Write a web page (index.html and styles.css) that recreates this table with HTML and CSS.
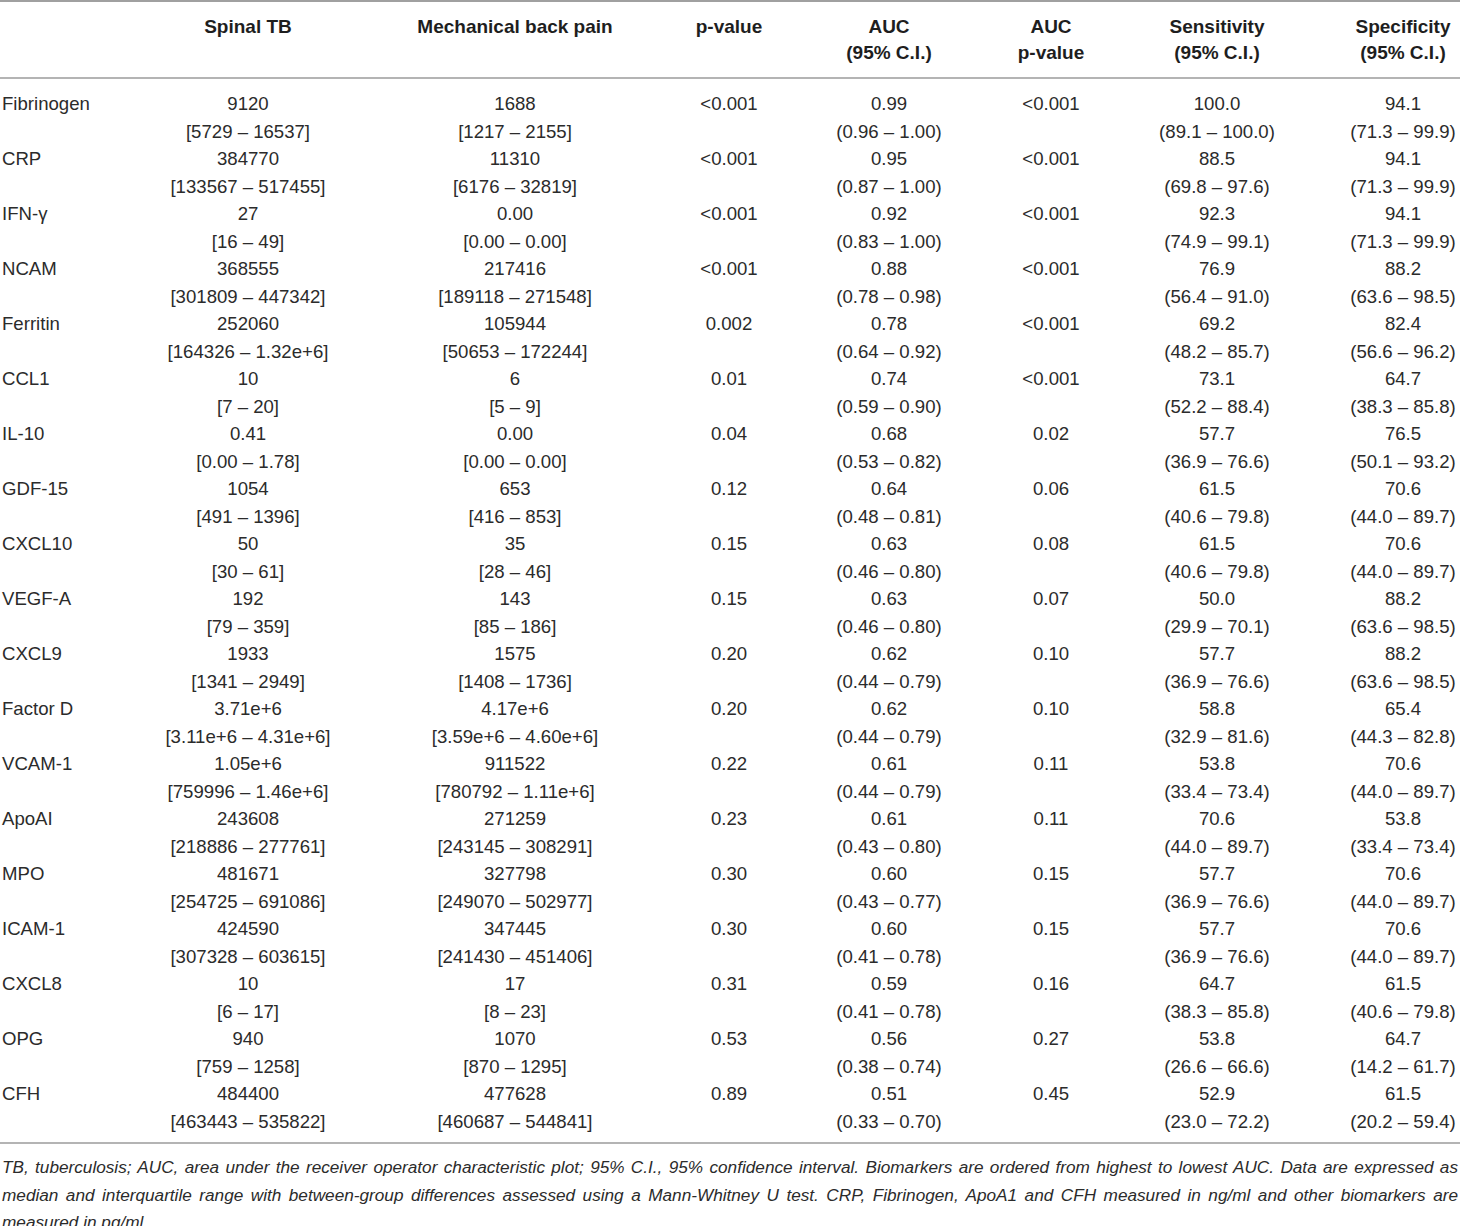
FILE: index.html
```html
<!DOCTYPE html>
<html>
<head>
<meta charset="utf-8">
<link rel="stylesheet" href="styles.css">
</head>
<body>
<table class="data">
<colgroup>
<col class="c0"><col class="c1"><col class="c2"><col class="c3"><col class="c4"><col class="c5"><col class="c6"><col class="c7">
</colgroup>
<thead>
<tr>
<th></th>
<th>Spinal TB</th>
<th>Mechanical back pain</th>
<th>p-value</th>
<th>AUC<br>(95% C.I.)</th>
<th>AUC<br>p-value</th>
<th>Sensitivity<br>(95% C.I.)</th>
<th>Specificity<br>(95% C.I.)</th>
</tr>
</thead>
<tbody>
<tr><td class="name">Fibrinogen</td><td>9120<br>[5729 – 16537]</td><td>1688<br>[1217 – 2155]</td><td>&lt;0.001</td><td>0.99<br>(0.96 – 1.00)</td><td>&lt;0.001</td><td>100.0<br>(89.1 – 100.0)</td><td>94.1<br>(71.3 – 99.9)</td></tr>
<tr><td class="name">CRP</td><td>384770<br>[133567 – 517455]</td><td>11310<br>[6176 – 32819]</td><td>&lt;0.001</td><td>0.95<br>(0.87 – 1.00)</td><td>&lt;0.001</td><td>88.5<br>(69.8 – 97.6)</td><td>94.1<br>(71.3 – 99.9)</td></tr>
<tr><td class="name">IFN-γ</td><td>27<br>[16 – 49]</td><td>0.00<br>[0.00 – 0.00]</td><td>&lt;0.001</td><td>0.92<br>(0.83 – 1.00)</td><td>&lt;0.001</td><td>92.3<br>(74.9 – 99.1)</td><td>94.1<br>(71.3 – 99.9)</td></tr>
<tr><td class="name">NCAM</td><td>368555<br>[301809 – 447342]</td><td>217416<br>[189118 – 271548]</td><td>&lt;0.001</td><td>0.88<br>(0.78 – 0.98)</td><td>&lt;0.001</td><td>76.9<br>(56.4 – 91.0)</td><td>88.2<br>(63.6 – 98.5)</td></tr>
<tr><td class="name">Ferritin</td><td>252060<br>[164326 – 1.32e+6]</td><td>105944<br>[50653 – 172244]</td><td>0.002</td><td>0.78<br>(0.64 – 0.92)</td><td>&lt;0.001</td><td>69.2<br>(48.2 – 85.7)</td><td>82.4<br>(56.6 – 96.2)</td></tr>
<tr><td class="name">CCL1</td><td>10<br>[7 – 20]</td><td>6<br>[5 – 9]</td><td>0.01</td><td>0.74<br>(0.59 – 0.90)</td><td>&lt;0.001</td><td>73.1<br>(52.2 – 88.4)</td><td>64.7<br>(38.3 – 85.8)</td></tr>
<tr><td class="name">IL-10</td><td>0.41<br>[0.00 – 1.78]</td><td>0.00<br>[0.00 – 0.00]</td><td>0.04</td><td>0.68<br>(0.53 – 0.82)</td><td>0.02</td><td>57.7<br>(36.9 – 76.6)</td><td>76.5<br>(50.1 – 93.2)</td></tr>
<tr><td class="name">GDF-15</td><td>1054<br>[491 – 1396]</td><td>653<br>[416 – 853]</td><td>0.12</td><td>0.64<br>(0.48 – 0.81)</td><td>0.06</td><td>61.5<br>(40.6 – 79.8)</td><td>70.6<br>(44.0 – 89.7)</td></tr>
<tr><td class="name">CXCL10</td><td>50<br>[30 – 61]</td><td>35<br>[28 – 46]</td><td>0.15</td><td>0.63<br>(0.46 – 0.80)</td><td>0.08</td><td>61.5<br>(40.6 – 79.8)</td><td>70.6<br>(44.0 – 89.7)</td></tr>
<tr><td class="name">VEGF-A</td><td>192<br>[79 – 359]</td><td>143<br>[85 – 186]</td><td>0.15</td><td>0.63<br>(0.46 – 0.80)</td><td>0.07</td><td>50.0<br>(29.9 – 70.1)</td><td>88.2<br>(63.6 – 98.5)</td></tr>
<tr><td class="name">CXCL9</td><td>1933<br>[1341 – 2949]</td><td>1575<br>[1408 – 1736]</td><td>0.20</td><td>0.62<br>(0.44 – 0.79)</td><td>0.10</td><td>57.7<br>(36.9 – 76.6)</td><td>88.2<br>(63.6 – 98.5)</td></tr>
<tr><td class="name">Factor D</td><td>3.71e+6<br>[3.11e+6 – 4.31e+6]</td><td>4.17e+6<br>[3.59e+6 – 4.60e+6]</td><td>0.20</td><td>0.62<br>(0.44 – 0.79)</td><td>0.10</td><td>58.8<br>(32.9 – 81.6)</td><td>65.4<br>(44.3 – 82.8)</td></tr>
<tr><td class="name">VCAM-1</td><td>1.05e+6<br>[759996 – 1.46e+6]</td><td>911522<br>[780792 – 1.11e+6]</td><td>0.22</td><td>0.61<br>(0.44 – 0.79)</td><td>0.11</td><td>53.8<br>(33.4 – 73.4)</td><td>70.6<br>(44.0 – 89.7)</td></tr>
<tr><td class="name">ApoAI</td><td>243608<br>[218886 – 277761]</td><td>271259<br>[243145 – 308291]</td><td>0.23</td><td>0.61<br>(0.43 – 0.80)</td><td>0.11</td><td>70.6<br>(44.0 – 89.7)</td><td>53.8<br>(33.4 – 73.4)</td></tr>
<tr><td class="name">MPO</td><td>481671<br>[254725 – 691086]</td><td>327798<br>[249070 – 502977]</td><td>0.30</td><td>0.60<br>(0.43 – 0.77)</td><td>0.15</td><td>57.7<br>(36.9 – 76.6)</td><td>70.6<br>(44.0 – 89.7)</td></tr>
<tr><td class="name">ICAM-1</td><td>424590<br>[307328 – 603615]</td><td>347445<br>[241430 – 451406]</td><td>0.30</td><td>0.60<br>(0.41 – 0.78)</td><td>0.15</td><td>57.7<br>(36.9 – 76.6)</td><td>70.6<br>(44.0 – 89.7)</td></tr>
<tr><td class="name">CXCL8</td><td>10<br>[6 – 17]</td><td>17<br>[8 – 23]</td><td>0.31</td><td>0.59<br>(0.41 – 0.78)</td><td>0.16</td><td>64.7<br>(38.3 – 85.8)</td><td>61.5<br>(40.6 – 79.8)</td></tr>
<tr><td class="name">OPG</td><td>940<br>[759 – 1258]</td><td>1070<br>[870 – 1295]</td><td>0.53</td><td>0.56<br>(0.38 – 0.74)</td><td>0.27</td><td>53.8<br>(26.6 – 66.6)</td><td>64.7<br>(14.2 – 61.7)</td></tr>
<tr><td class="name">CFH</td><td>484400<br>[463443 – 535822]</td><td>477628<br>[460687 – 544841]</td><td>0.89</td><td>0.51<br>(0.33 – 0.70)</td><td>0.45</td><td>52.9<br>(23.0 – 72.2)</td><td>61.5<br>(20.2 – 59.4)</td></tr>
</tbody>
</table>
<p class="note">TB, tuberculosis; AUC, area under the receiver operator characteristic plot; 95% C.I., 95% confidence interval. Biomarkers are ordered from highest to lowest AUC. Data are expressed as median and interquartile range with between-group differences assessed using a Mann-Whitney U test. CRP, Fibrinogen, ApoA1 and CFH measured in ng/ml and other biomarkers are measured in pg/ml.</p>
</body>
</html>
```

FILE: styles.css
```css
html, body {
  margin: 0;
  padding: 0;
  background: #ffffff;
}
body {
  font-family: "Liberation Sans", Arial, sans-serif;
  color: #2b2b2b;
  width: 1460px;
}
.data {
  width: 1460px;
  border-collapse: collapse;
  table-layout: fixed;
  font-size: 18.6px;
  line-height: 27.5px;
}
.c0 { width: 160px; }
.c1 { width: 176px; }
.c2 { width: 358px; }
.c3 { width: 70px; }
.c4 { width: 250px; }
.c5 { width: 74px; }
.c6 { width: 258px; }
.c7 { width: 114px; }
.data thead tr {
  border-top: 2px solid #a0a0a0;
  border-bottom: 2px solid #b4b4b4;
}
.data th {
  font-weight: bold;
  font-size: 19px;
  color: #1e1e1e;
  text-align: center;
  vertical-align: top;
  padding: 12px 0 11px;
  line-height: 26px;
  white-space: nowrap;
}
.data td {
  text-align: center;
  vertical-align: top;
  padding: 0;
  white-space: nowrap;
  font-weight: normal;
}
.data td.name {
  text-align: left;
  padding-left: 2px;
}
.data tbody tr:first-child td { padding-top: 11px; }
.data tbody tr:last-child td { padding-bottom: 7px; }
.data tbody tr:last-child { border-bottom: 2px solid #b4b4b4; }
.note {
  margin: 10px 0 0;
  padding: 0 2px;
  font-style: italic;
  font-size: 17.2px;
  line-height: 27.5px;
  text-align: justify;
}
```
